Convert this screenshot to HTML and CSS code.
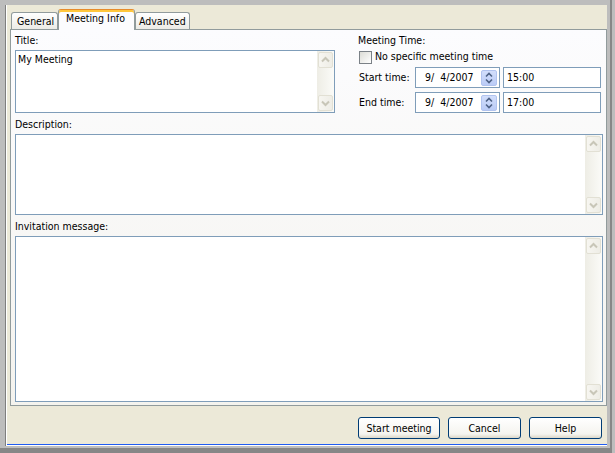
FILE: index.html
```html
<!DOCTYPE html>
<html>
<head>
<meta charset="utf-8">
<link rel="stylesheet" href="styles.css">
</head>
<body>
<div class="frame">
  <div class="dialog">
    <div class="tabs">
      <div class="tab tab-general">General</div>
      <div class="tab tab-active">Meeting Info</div>
      <div class="tab tab-advanced">Advanced</div>
    </div>
    <div class="panel">
      <div class="top">
        <div class="left-col">
          <div class="label">Title:</div>
          <div class="field field-title">
            <div class="field-text">My Meeting</div>
            <div class="vscroll">
              <div class="sbtn"><svg width="13" height="14" viewBox="0 0 13 14"><path d="M3 8.5 L6.5 5 L10 8.5" fill="none" stroke="#c8c6b8" stroke-width="2"/></svg></div>
              <div class="sbtn"><svg width="13" height="14" viewBox="0 0 13 14"><path d="M3 5.5 L6.5 9 L10 5.5" fill="none" stroke="#c8c6b8" stroke-width="2"/></svg></div>
            </div>
          </div>
        </div>
        <div class="right-col">
          <div class="label">Meeting Time:</div>
          <div class="check-row"><span class="checkbox"></span><span class="check-text">No specific meeting time</span></div>
          <div class="time-row">
            <span class="tlabel">Start time:</span>
            <div class="datebox"><span class="date-text">9/  4/2007</span>
              <span class="spin"><svg width="14" height="14" viewBox="0 0 14 14"><path d="M4 5.5 L7 2.5 L10 5.5" fill="none" stroke="#4d6185" stroke-width="1.6"/><path d="M4 8.5 L7 11.5 L10 8.5" fill="none" stroke="#4d6185" stroke-width="1.6"/></svg></span>
            </div>
            <div class="timebox">15:00</div>
          </div>
          <div class="time-row row-end">
            <span class="tlabel">End time:</span>
            <div class="datebox"><span class="date-text">9/  4/2007</span>
              <span class="spin"><svg width="14" height="14" viewBox="0 0 14 14"><path d="M4 5.5 L7 2.5 L10 5.5" fill="none" stroke="#4d6185" stroke-width="1.6"/><path d="M4 8.5 L7 11.5 L10 8.5" fill="none" stroke="#4d6185" stroke-width="1.6"/></svg></span>
            </div>
            <div class="timebox">17:00</div>
          </div>
        </div>
      </div>
      <div class="label label-gap">Description:</div>
      <div class="field field-desc">
        <div class="field-text"></div>
        <div class="vscroll">
          <div class="sbtn"><svg width="13" height="14" viewBox="0 0 13 14"><path d="M3 8.5 L6.5 5 L10 8.5" fill="none" stroke="#c8c6b8" stroke-width="2"/></svg></div>
          <div class="sbtn"><svg width="13" height="14" viewBox="0 0 13 14"><path d="M3 5.5 L6.5 9 L10 5.5" fill="none" stroke="#c8c6b8" stroke-width="2"/></svg></div>
        </div>
      </div>
      <div class="label label-gap">Invitation message:</div>
      <div class="field field-inv">
        <div class="field-text"></div>
        <div class="vscroll">
          <div class="sbtn"><svg width="13" height="14" viewBox="0 0 13 14"><path d="M3 8.5 L6.5 5 L10 8.5" fill="none" stroke="#c8c6b8" stroke-width="2"/></svg></div>
          <div class="sbtn"><svg width="13" height="14" viewBox="0 0 13 14"><path d="M3 5.5 L6.5 9 L10 5.5" fill="none" stroke="#c8c6b8" stroke-width="2"/></svg></div>
        </div>
      </div>
    </div>
    <div class="buttons">
      <button class="btn btn-start">Start meeting</button>
      <button class="btn">Cancel</button>
      <button class="btn">Help</button>
    </div>
    <div class="blueline"></div>
  </div>
</div>
</body>
</html>
```
FILE: styles.css
```css
* { box-sizing: border-box; }
html, body { margin: 0; padding: 0; }
body {
  width: 615px;
  height: 453px;
  overflow: hidden;
  background: #bdbdbd;
  font-family: "DejaVu Sans Condensed", "Liberation Sans", Arial, sans-serif;
  font-size: 10.5px;
  line-height: 13px;
  color: #000;
}
.frame {
  width: 612px;
  height: 453px;
  padding: 5px 3px 2px 5px;
  border-right: 2px solid #878787;
  border-bottom: 5px solid #878787;
  background: #bdbdbd;
}
.dialog {
  width: 602px;
  height: 441px;
  background: #ece9d8;
  border-left: 1px solid #7f7f7f;
  box-shadow: inset 1px 0 0 #ffffff;
  display: flex;
  flex-direction: column;
}
.tabs {
  display: flex;
  align-items: flex-end;
  height: 24px;
  margin-left: 5px;
}
.tab {
  height: 17px;
  border: 1px solid #919b9c;
  border-bottom: none;
  border-radius: 3px 3px 0 0;
  background: linear-gradient(#ffffff, #ecebe6);
  padding-top: 2px;
  white-space: nowrap;
}
.tab-general { width: 47px; padding-left: 5px; }
.tab-advanced { width: 55px; padding-left: 3px; }
.tab-active {
  width: 77px;
  height: 21px;
  margin-bottom: -1px;
  padding-left: 7px;
  padding-top: 2px;
  border-top: 1px solid #e68b2c;
  box-shadow: inset 0 2px 0 #ffc73c;
  background: #fcfcfe;
  position: relative;
  z-index: 1;
}
.panel {
  margin-left: 4px;
  width: 597px;
  height: 377px;
  border: 1px solid #919b9c;
  background: linear-gradient(#fcfcfe, #f4f3ee);
  padding: 4px 3px 3px 4px;
}
.top { display: flex; }
.left-col { width: 320px; }
.right-col { width: 245px; margin-left: 23px; }
.label { height: 13px; white-space: nowrap; }
.label-gap { margin-top: 5px; }
.field {
  margin-top: 3px;
  border: 1px solid #7f9db9;
  background: #ffffff;
  display: flex;
}
.field-title { height: 63px; }
.field-desc { height: 81px; }
.field-inv { height: 166px; }
.field-text { flex: 1; padding: 2px 2px; }
.vscroll {
  width: 17px;
  padding: 1px;
  display: flex;
  flex-direction: column;
  justify-content: space-between;
  background: linear-gradient(to right, #eeede5, #fbfbf8);
}
.sbtn {
  height: 16px;
  border: 1px solid #e2e0d4;
  border-radius: 2px;
  background: linear-gradient(to right, #f7f6f1, #eeede6);
  display: flex;
  align-items: center;
  justify-content: center;
}
.sbtn svg { display: block; }
.check-row {
  margin-top: 3px;
  height: 14px;
  display: flex;
  align-items: flex-start;
}
.checkbox {
  width: 13px;
  height: 13px;
  margin-top: 1px;
  margin-left: 1px;
  border: 1px solid #7b8187;
  background: linear-gradient(135deg, #dcdcd6, #ffffff);
}
.check-text { margin-left: 3px; white-space: nowrap; }
.time-row {
  margin-top: 3px;
  height: 21px;
  display: flex;
  align-items: center;
}
.row-end { margin-top: 4px; }
.tlabel { width: 57px; padding-left: 1px; white-space: nowrap; }
.datebox {
  width: 85px;
  height: 21px;
  border: 1px solid #7f9db9;
  background: #ffffff;
  display: flex;
  align-items: center;
  padding-left: 9px;
}
.date-text { white-space: pre; }
.spin {
  width: 16px;
  height: 16px;
  margin-left: auto;
  margin-right: 2px;
  align-self: flex-start;
  margin-top: 2px;
  border: 1px solid #b1c3ef;
  border-radius: 2px;
  background: linear-gradient(#d2defb, #bacbf6);
  display: flex;
  align-items: center;
  justify-content: center;
}
.spin svg { display: block; }
.timebox {
  width: 98px;
  height: 21px;
  margin-left: 3px;
  border: 1px solid #7f9db9;
  background: #ffffff;
  padding-left: 3px;
  display: flex;
  align-items: center;
}
.buttons {
  display: flex;
  justify-content: flex-end;
  gap: 8px;
  margin-top: 11px;
  margin-right: 5px;
}
.btn {
  width: 73px;
  height: 22px;
  margin: 0;
  padding: 0;
  border: 1px solid #003c74;
  border-radius: 3px;
  background: linear-gradient(#ffffff, #f5f4ef 80%, #dcd7c8);
  font-family: "DejaVu Sans Condensed", "Liberation Sans", Arial, sans-serif;
  font-size: 10.5px;
  line-height: 20px;
  color: #000;
  text-align: center;
}
.btn-start { width: 82px; }
.blueline {
  margin-top: 5px;
  margin-left: 1px;
  height: 2px;
  border-top: 1px solid #1f5cf2;
  border-bottom: 1px solid #ffffff;
}
```
